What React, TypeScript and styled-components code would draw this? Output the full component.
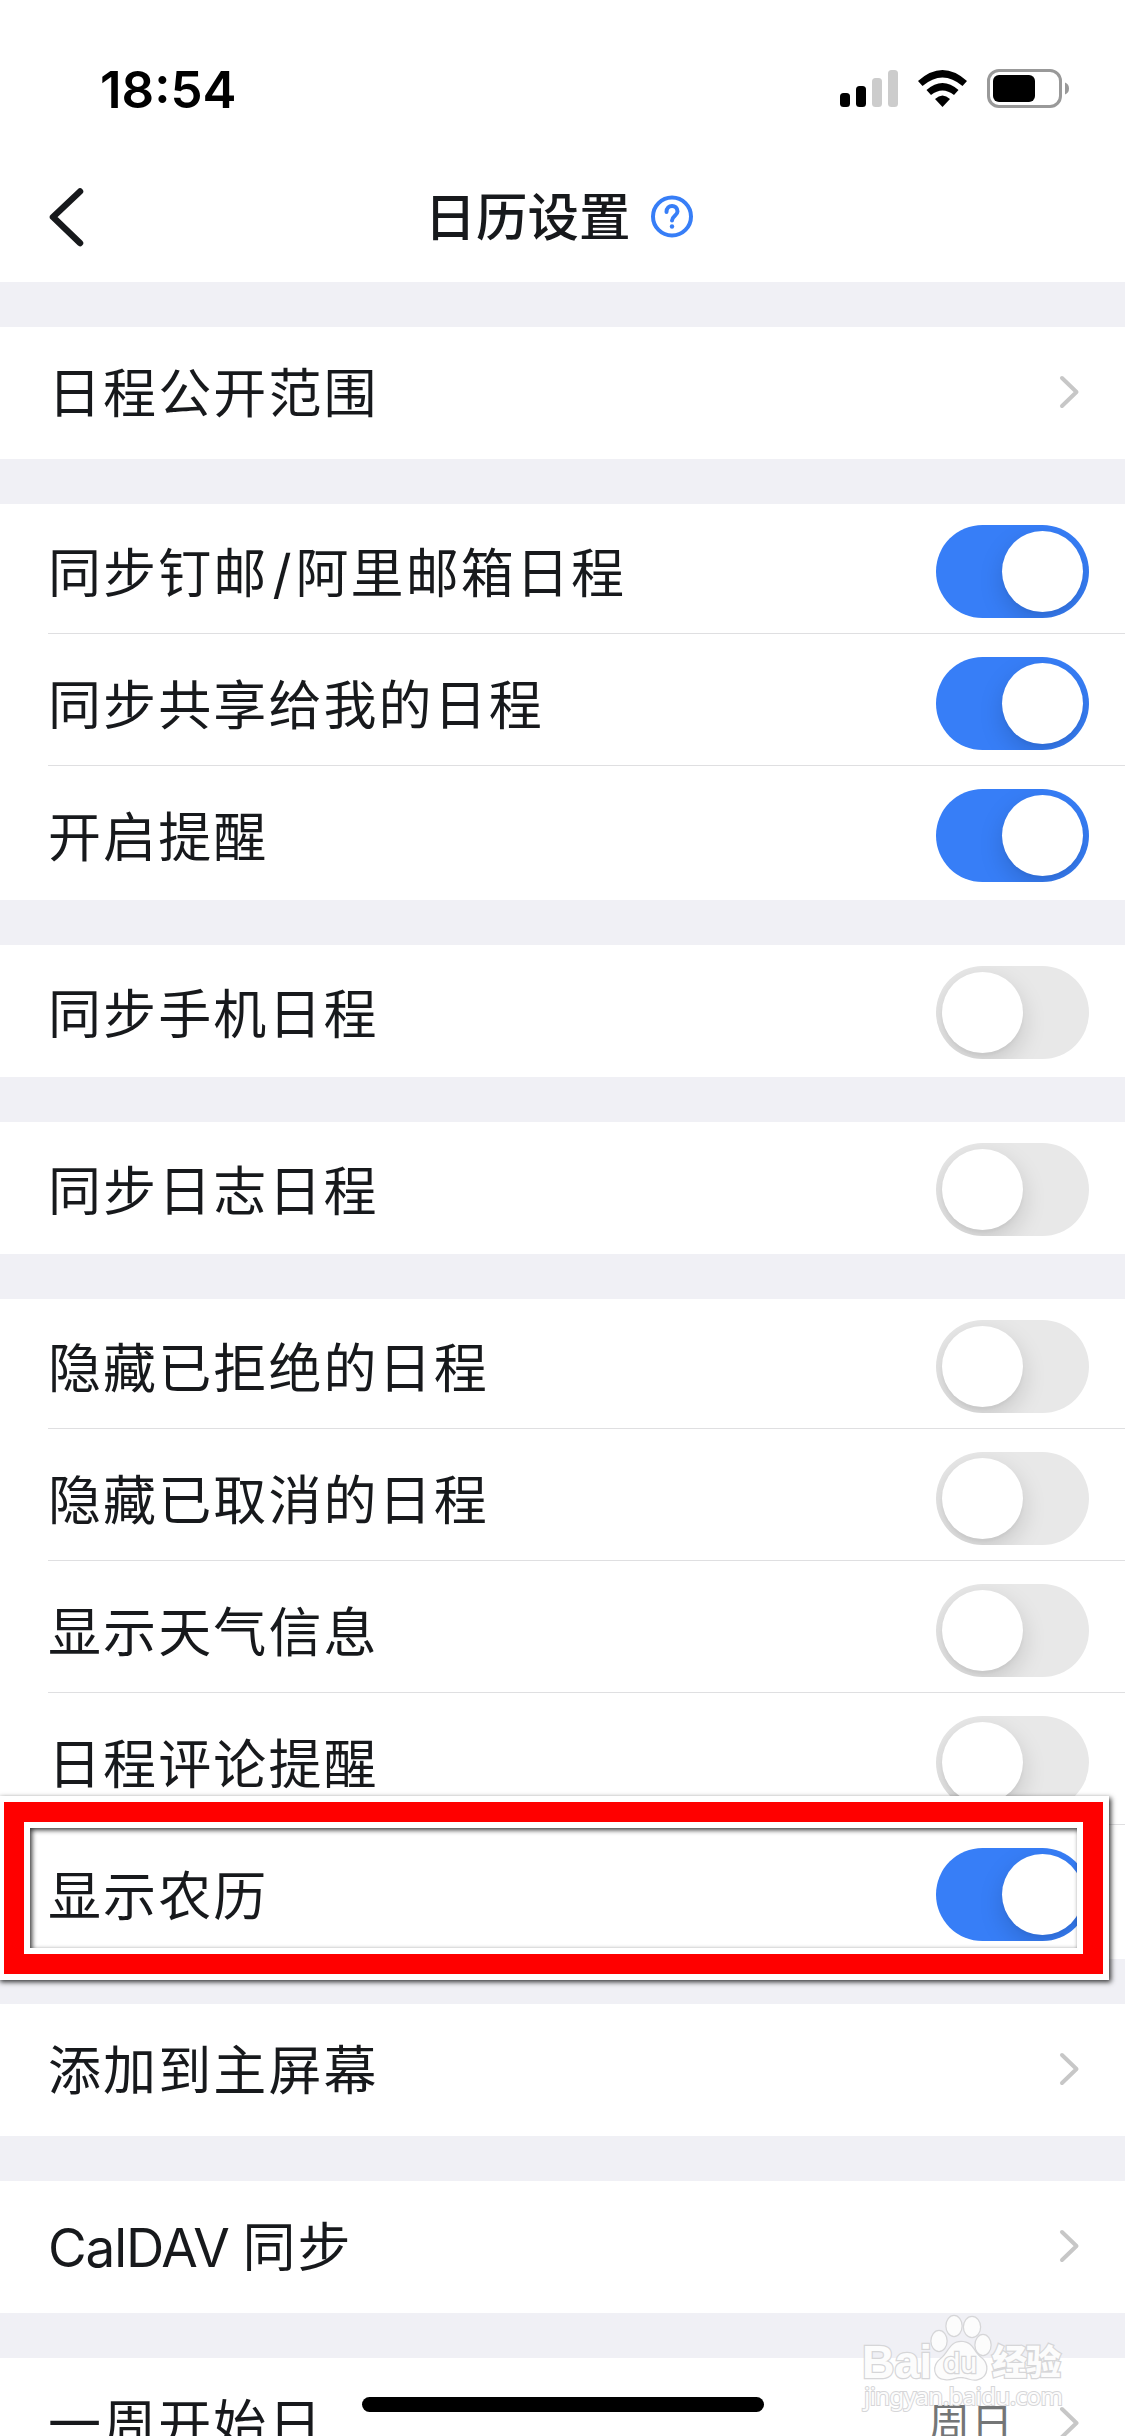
import React from "react";
import styled, { createGlobalStyle, css } from "styled-components";

const Global = createGlobalStyle`
  * { box-sizing: border-box; }
  html, body { margin: 0; padding: 0; background: #f0f0f5; }
  body { overflow: hidden; }
`;

const Screen = styled.main`
  position: relative;
  display: flex;
  flex-direction: column;
  width: 1125px;
  height: 2436px;
  overflow: hidden;
  background: #f0f0f5;
  color: #17191c;
  font-family: Inter, "Noto Sans CJK SC", sans-serif;
`;

const Top = styled.header`
  flex: none;
  height: 282px;
  background: #fff;
`;

const StatusBar = styled.div`
  display: flex;
  justify-content: space-between;
  height: 132px;
  padding: 60px 56px 0 100px;
`;

const Clock = styled.time`
  color: #000;
  font-size: 51px;
  line-height: 60px;
  font-weight: 600;
  letter-spacing: 0;
`;

const StatusIcons = styled.div`
  display: flex;
  align-items: flex-start;
  padding-top: 9px;
`;

const NavBar = styled.nav`
  display: grid;
  grid-template-columns: 60px 1fr 60px;
  align-items: center;
  height: 150px;
  padding: 19px 48px 0;
`;

const BackButton = styled.button`
  display: flex;
  width: 60px;
  padding: 0;
  border: 0;
  background: none;
`;

const Heading = styled.div`
  display: flex;
  align-items: center;
  justify-content: center;
  padding-right: 7px;
`;

const Title = styled.h1`
  margin: 0;
  font-size: 51.5px;
  line-height: 76px;
  font-weight: 500;
`;

const Help = styled.span`
  display: flex;
  padding-left: 19px;
`;

const List = styled.div`
  display: flex;
  flex-direction: column;
  gap: 45px;
  padding-top: 45px;
`;

const Group = styled.section`
  flex: none;
  background: #fff;
`;

const Row = styled.div<{ $divided?: boolean; $switch?: boolean }>`
  display: flex;
  align-items: center;
  justify-content: space-between;
  height: 132px;
  padding: ${(p) => (p.$switch ? "3px" : "0")} 36px 0 48px;
  ${(p) =>
    p.$divided &&
    css`
      background: linear-gradient(#dfdfe1, #dfdfe1) 48px 129px / 100% 1px no-repeat;
    `}
`;

const Label = styled.span<{ $switch?: boolean }>`
  padding-top: ${(p) => (p.$switch ? "5px" : "1px")};
  font-size: 53px;
  line-height: 76px;
  letter-spacing: 2.1px;
  white-space: pre;
`;

const Latin = styled.span<{ $spacing: number; $lead?: number }>`
  margin-left: ${(p) => p.$lead ?? 0}px;
  letter-spacing: ${(p) => p.$spacing}px;
`;

const Value = styled.span`
  margin-left: auto;
  margin-right: 45px;
  color: #747677;
  font-size: 42px;
  line-height: 64px;
  letter-spacing: 1px;
`;

const Toggle = styled.span<{ $on: boolean }>`
  display: flex;
  justify-content: ${(p) => (p.$on ? "flex-end" : "flex-start")};
  width: 153px;
  height: 93px;
  padding: 6px;
  overflow: hidden;
  border-radius: 47px;
  background: ${(p) => (p.$on ? "#377ef7" : "#e8e8e8")};
`;

const Knob = styled.span`
  width: 81px;
  height: 81px;
  border-radius: 50%;
  background: #fff;
  box-shadow: 0 9px 24px rgba(0, 0, 0, 0.15), 0 3px 3px rgba(0, 0, 0, 0.03);
`;

const Arrow = styled.svg`
  flex: none;
  margin: 0 9px 2px 0;
`;

const Highlight = styled.div`
  position: absolute;
  left: 4px;
  top: 1802px;
  width: 1099px;
  height: 172px;
  border: 20px solid #f00;
  box-shadow: inset 0 0 0 6px #fff, inset 2px 2px 5px 6px rgba(0, 0, 0, 0.8),
    0 0 0 6px #fff, 2px 2px 5px 6px rgba(0, 0, 0, 0.8);
`;

const HomeIndicator = styled.div`
  position: absolute;
  left: 362px;
  top: 2397px;
  width: 402px;
  height: 15px;
  border-radius: 8px;
  background: #000;
`;

const Watermark = styled.svg`
  position: absolute;
  left: 855px;
  top: 2308px;
`;

const Chevron = () => (
  <Arrow width="21" height="34" viewBox="0 0 21 34" fill="none" stroke="#c7c7c7" strokeWidth="4" strokeLinecap="round" strokeLinejoin="round">
    <path d="M3 3 17.5 17 3 31" />
  </Arrow>
);

type Item = { label: React.ReactNode; on?: boolean; value?: string };

const groups: Item[][] = [
  [{ label: "日程公开范围" }],
  [
    { label: <>同步钉邮<Latin $spacing={4} $lead={4}>/</Latin>阿里邮箱日程</>, on: true },
    { label: "同步共享给我的日程", on: true },
    { label: "开启提醒", on: true },
  ],
  [{ label: "同步手机日程", on: false }],
  [{ label: "同步日志日程", on: false }],
  [
    { label: "隐藏已拒绝的日程", on: false },
    { label: "隐藏已取消的日程", on: false },
    { label: "显示天气信息", on: false },
    { label: "日程评论提醒", on: false },
    { label: "显示农历", on: true },
  ],
  [{ label: "添加到主屏幕" }],
  [{ label: <><Latin $spacing={-1.1}>CalDAV </Latin>同步</> }],
  [{ label: "一周开始日", value: "周日" }],
];

export default function App() {
  return (
    <>
      <Global />
      <Screen>
        <Top>
          <StatusBar>
            <Clock>18:54</Clock>
            <StatusIcons>
              <svg width="230" height="42" viewBox="0 0 230 42">
                <rect x="1" y="24" width="10" height="14" rx="3.5" />
                <rect x="17" y="17" width="10" height="21" rx="3.5" />
                <rect x="33" y="9" width="10" height="29" rx="3.5" fill="#ccc" />
                <rect x="49" y="1" width="10" height="37" rx="3.5" fill="#ccc" />
                <path d="M79 12Q103.500 -10 128 12L123.500 17Q103.500 0 83.500 17ZM87.500 21Q103.500 7 119.500 21L115 26Q103.500 17 92 26ZM96 30Q103.500 23 111 30L103.500 38Z" />
                <rect x="149.500" y="1.500" width="72" height="36" rx="10.500" fill="none" stroke="#999" strokeWidth="3" />
                <rect x="154" y="6" width="42" height="27" rx="6" />
                <path d="M226 13.500Q230 15 230 19.500T226 25.500Z" fill="#999" />
              </svg>
            </StatusIcons>
          </StatusBar>
          <NavBar>
            <BackButton aria-label="返回">
              <svg width="40" height="62" viewBox="0 0 40 62" fill="none" stroke="#17191c" strokeWidth="6.5" strokeLinecap="round" strokeLinejoin="round">
                <path d="M32 5.500 5 31 32 57" />
              </svg>
            </BackButton>
            <Heading>
              <Title>日历设置</Title>
              <Help>
                <svg width="44" height="44" viewBox="0 0 44 44" fill="none" stroke="#377ef7" strokeWidth="4" strokeLinecap="round">
                  <circle cx="22" cy="21.500" r="19" />
                  <path d="M16.500 17C16.500 9 27.500 9 27.500 16.500C27.500 20.500 22 21 22 25.500" />
                  <circle cx="22" cy="31.500" r="2.200" fill="#377ef7" stroke="none" />
                </svg>
              </Help>
            </Heading>
          </NavBar>
        </Top>
        <List>
          {groups.map((rows, g) => (
            <Group key={g}>
              {rows.map((row, i) => {
                const isSwitch = row.on !== undefined;
                return (
                  <Row key={i} $divided={i < rows.length - 1} $switch={isSwitch}>
                    <Label $switch={isSwitch}>{row.label}</Label>
                    {row.value && <Value>{row.value}</Value>}
                    {row.on === undefined ? <Chevron /> : <Toggle $on={row.on}><Knob /></Toggle>}
                  </Row>
                );
              })}
            </Group>
          ))}
        </List>
        <Highlight />
        <HomeIndicator />
        <Watermark width="220" height="110" viewBox="0 0 220 110" fill="#fcfcfc" stroke="#d6d6d8" strokeWidth="2.5" paintOrder="stroke">
          <text x="7" y="70" fontFamily="Liberation Sans, sans-serif" fontWeight="700" fontSize="46" textLength="70" lengthAdjust="spacingAndGlyphs">Bai</text>
          <ellipse cx="84" cy="33" rx="7.500" ry="10" />
          <ellipse cx="99" cy="18" rx="7.500" ry="10" />
          <ellipse cx="117" cy="19" rx="8" ry="10" />
          <ellipse cx="128" cy="37" rx="7.500" ry="10" />
          <path d="M106 34C95 34 94 45 86 51C77 58 79 70 90 71C97 72 99 69 106 69C113 69 116 73 123 71C134 68 133 55 126 50C118 44 118 34 106 34Z" />
          <text x="88" y="65" fontFamily="Inter, sans-serif" fontWeight="500" fontSize="28" textLength="34">du</text>
          <text x="137" y="67" fontFamily="Noto Sans CJK SC, sans-serif" fontWeight="900" fontSize="35" textLength="69">经验</text>
          <text x="9" y="97" fontFamily="Noto Sans, sans-serif" fontSize="24" strokeWidth="2" textLength="199">jingyan.baidu.com</text>
        </Watermark>
      </Screen>
    </>
  );
}
